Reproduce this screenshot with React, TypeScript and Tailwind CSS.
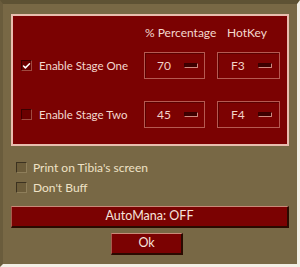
import { Check } from 'lucide-react';

const font = { fontFamily: 'Lato, "Noto Sans", sans-serif' };

function Box({ checked, dark }: { checked?: boolean; dark?: boolean }) {
  return (
    <div
      className={`w-[11px] h-[11px] shrink-0 flex items-center justify-center border ${
        dark ? 'border-[#3a0000] bg-[#6a0000] border-r-[#a04a40] border-b-[#a04a40]' : 'border-[#3c3220] bg-[#6c5c3a] border-r-[#8e7e5a] border-b-[#8e7e5a]'
      }`}
    >
      {checked && <Check className="w-[10px] h-[10px] text-white" strokeWidth={4} />}
    </div>
  );
}

function Field({ value, width, pl, slotRight }: { value: string; width: string; pl: string; slotRight: string }) {
  return (
    <div className={`${width} h-[27px] flex items-center justify-between border border-[#b65a52] bg-[#7c0202] shadow-[inset_1px_1px_0_#5a0000] ${pl} ${slotRight}`}>
      <span className="text-[12px] text-[#f2d2c8]">{value}</span>
      <div className="w-[14px] h-[5px] bg-[#3e0000] border border-[#3a0000] border-b-[#d08a80] border-r-[#d08a80] rounded-[1px]" />
    </div>
  );
}

export default function App() {
  return (
    <div
      className="w-[300px] h-[267px] bg-[#786845] border-t-4 border-l-[3px] border-r-[3px] border-b-[3px] border-t-[#5e5234] border-l-[#6a5c3c] border-r-[#f3efe6] border-b-[#f3efe6] overflow-hidden"
      style={font}
    >
      <div className="ml-[8px] mt-[10px] w-[278px] h-[132px] border-2 border-[#e9bdae] bg-[#7b0202] pt-[8px] pl-[8px]">
        <div className="flex h-[18px] items-center text-[12px] text-[#f4d8ce]">
          <div className="w-[124px]" />
          <div className="w-[82px]">% Percentage</div>
          <div>HotKey</div>
        </div>
        <div className="flex items-center mt-[10px]">
          <div className="w-[123px] flex items-center gap-[7px]">
            <Box checked dark />
            <span className="text-[11.5px] text-[#f4d8ce]">Enable Stage One</span>
          </div>
          <Field value="70" width="w-[61px]" pl="pl-[12px]" slotRight="pr-[6px]" />
          <div className="w-[12px]" />
          <Field value="F3" width="w-[63px]" pl="pl-[13px]" slotRight="pr-[7px]" />
        </div>
        <div className="flex items-center mt-[22px]">
          <div className="w-[123px] flex items-center gap-[7px]">
            <Box dark />
            <span className="text-[11.5px] text-[#f4d8ce]">Enable Stage Two</span>
          </div>
          <Field value="45" width="w-[61px]" pl="pl-[12px]" slotRight="pr-[6px]" />
          <div className="w-[12px]" />
          <Field value="F4" width="w-[63px]" pl="pl-[13px]" slotRight="pr-[7px]" />
        </div>
      </div>

      <div className="ml-[13px] mt-[15px] flex flex-col gap-[7px] text-[12px] text-[#efe2c6]">
        <div className="flex items-center gap-[6px] h-[13px]">
          <Box />
          <span>Print on Tibia's screen</span>
        </div>
        <div className="flex items-center gap-[6px] h-[13px]">
          <Box />
          <span>Don't Buff</span>
        </div>
      </div>

      <div className="ml-[8px] mt-[12px] w-[278px] h-[22px] flex items-center justify-center bg-[#7b0202] border-t border-l border-t-[#c98a78] border-l-[#a85a4c] border-b-2 border-r-2 border-b-[#2a0a00] border-r-[#2a0a00] text-[12.5px] text-[#f6e4dc]">
        AutoMana: OFF
      </div>

      <div className="ml-[108px] mt-[5px] w-[72px] h-[22px] flex items-center justify-center bg-[#7b0202] border-t border-l border-t-[#c98a78] border-l-[#a85a4c] border-b-2 border-r-2 border-b-[#2a0a00] border-r-[#2a0a00] text-[12.5px] text-[#f6e4dc]">
        Ok
      </div>
    </div>
  );
}
